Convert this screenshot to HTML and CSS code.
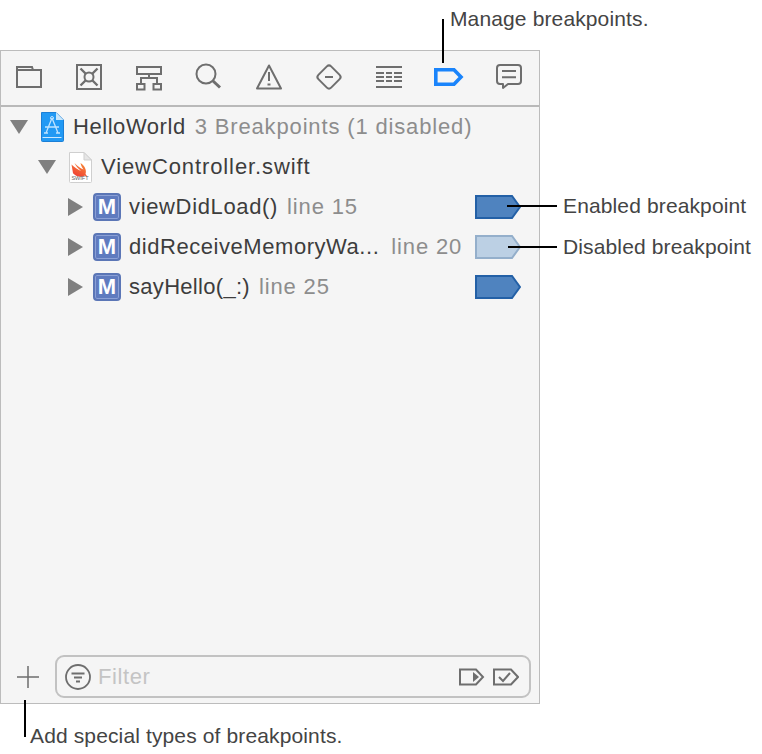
FILE: index.html
```html
<!DOCTYPE html>
<html lang="en">
<head>
<meta charset="utf-8">
<title>Breakpoint navigator</title>
<link rel="stylesheet" href="styles.css">
</head>
<body>
<div class="page">
  <section class="panel">
    <nav class="toolbar">
      <svg class="tool" viewBox="0 0 30 30"><path d="M3 25V5h15l1 3h8v17zM3 8h16"/></svg>
      <svg class="tool" viewBox="0 0 30 30"><rect x="3" y="3" width="24" height="24"/><circle cx="15" cy="15" r="4.500"/><path class="spike" d="M6.500 6.500l5 5M23.500 6.500l-5 5M6.500 23.500l5-5M23.500 23.500l-5-5"/></svg>
      <svg class="tool" viewBox="0 0 30 30"><rect x="3" y="5" width="24" height="7"/><rect x="3" y="22" width="7.500" height="5.500"/><rect x="19.500" y="22" width="7.500" height="5.500"/><path d="M15 12v4M7 22v-6h16v6"/></svg>
      <svg class="tool" viewBox="0 0 30 30"><circle cx="12" cy="12" r="9.500"/><path class="thick" d="M18.500 18.500l7.500 7"/></svg>
      <svg class="tool" viewBox="0 0 30 30"><path class="round" d="M15 3.500L27 26.500H3zM15 10v9"/><path class="thick" d="M15 21.500v2"/></svg>
      <svg class="tool" viewBox="0 0 30 30"><rect x="6" y="6" width="18" height="18" rx="3" transform="rotate(45 15 15)"/><path d="M11 15h8"/></svg>
      <svg class="tool" viewBox="0 0 30 30"><path d="M2 5h26M2 25h26M2 11h8M12 11h6M20 11h8M2 15h8M12 15h6M20 15h8M2 19h8M12 19h6M20 19h8"/></svg>
      <svg class="tool tool-active" viewBox="0 0 30 30"><path d="M1.800 7.800H20L27 15l-7 7.200H1.800z"/></svg>
      <svg class="tool" viewBox="0 0 30 30"><path class="round" d="M6 3h18a3 3 0 0 1 3 3v13a3 3 0 0 1-3 3H14l-5 4v-4H6a3 3 0 0 1-3-3V6a3 3 0 0 1 3-3zM8 9h14M8 15.300h14"/></svg>
    </nav>

    <div class="tree">
      <div class="row row-project">
        <span class="tri tri-down"></span>
        <svg class="file-icon" viewBox="0 0 24 30">
          <path class="app-page" d="M1.500 .5h14.500l7.500 7.500v20.500a1 1 0 0 1-1 1h-20a1 1 0 0 1-1-1z"/>
          <path class="app-fold" d="M16 .5v7.500h7.500z"/>
          <path class="app-rule" d="M2.500 25.500h19"/>
          <path class="app-a" d="M12 6L6 21M12 6l6 15M5 15h14M4 21h4M16 21h4"/>
          <circle class="app-dot" cx="12" cy="6" r="1.500"/>
        </svg>
        <span class="name">HelloWorld</span>
        <span class="detail">3 Breakpoints (1 disabled)</span>
      </div>
      <div class="row row-file">
        <span class="tri tri-down"></span>
        <svg class="file-icon swift-icon" viewBox="0 0 24 31">
          <defs>
            <linearGradient id="swiftFill" x1="0.800" y1="0" x2="0.200" y2="1">
              <stop offset="0" stop-color="#f88a36"/>
              <stop offset="1" stop-color="#ee3a34"/>
            </linearGradient>
          </defs>
          <path class="doc-page" d="M1.500 .5h14.500l7.500 7.500v21.500a1 1 0 0 1-1 1h-20a1 1 0 0 1-1-1z"/>
          <path class="doc-fold" d="M16 .5v7.500h7.500z"/>
          <path class="swift-bird" d="M3.500 12.500c3 3 6 5 9.500 6.500-3-2.500-5-5-6.500-8 3 3 6 5.500 9 6.500-1.500-2-2.500-4-3-6.500 4 2.500 6.500 7 5 11 1 1 1.500 2 1.500 3-1.200-1.200-2.500-1.400-3.500-.8-3 1.300-7.500.3-10.500-3-.5-3-1-6-1.500-8.700z"/>
          <text class="swift-text" x="12" y="27.500" text-anchor="middle">SWIFT</text>
        </svg>
        <span class="name">ViewController.swift</span>
      </div>
      <div class="row row-method">
        <span class="tri tri-right"></span>
        <span class="method-icon"><span class="method-letter">M</span></span>
        <span class="name">viewDidLoad()</span>
        <span class="detail">line 15</span>
        <svg class="flag" viewBox="0 0 46 24"><path d="M1 1h36l8 11-8 11H1z"/></svg>
      </div>
      <div class="row row-method">
        <span class="tri tri-right"></span>
        <span class="method-icon"><span class="method-letter">M</span></span>
        <span class="name name-truncated">didReceiveMemoryWa...</span>
        <span class="detail">line 20</span>
        <svg class="flag flag-off" viewBox="0 0 46 24"><path d="M1 1h36l8 11-8 11H1z"/></svg>
      </div>
      <div class="row row-method">
        <span class="tri tri-right"></span>
        <span class="method-icon"><span class="method-letter">M</span></span>
        <span class="name name-narrow">sayHello(_:)</span>
        <span class="detail">line 25</span>
        <svg class="flag" viewBox="0 0 46 24"><path d="M1 1h36l8 11-8 11H1z"/></svg>
      </div>
    </div>

    <footer class="footer">
      <svg class="plus" viewBox="0 0 22 22"><path d="M11 0v22M0 11h22"/></svg>
      <div class="filter">
        <svg class="filter-icon" viewBox="0 0 26 26"><circle cx="13" cy="13" r="12"/><path d="M6.500 9.500h13M9 13.500h8M11 17.500h4"/></svg>
        <span class="filter-text">Filter</span>
        <svg class="filter-tag" viewBox="0 0 26 18"><path d="M1 1.500h16l7 7.500-7 7.500H1z"/><path class="tag-play" d="M14 4l6 5-6 5z"/></svg>
        <svg class="filter-tag" viewBox="0 0 26 18"><path d="M1 1.500h17l7 7.500-7 7.500H1z"/><path d="M6 9l4 4 7-8"/></svg>
      </div>
    </footer>
  </section>

  <div class="line line-manage"></div>
  <div class="label label-manage">Manage breakpoints.</div>
  <div class="line line-enabled"></div>
  <div class="label label-enabled">Enabled breakpoint</div>
  <div class="line line-disabled"></div>
  <div class="label label-disabled">Disabled breakpoint</div>
  <div class="line line-add"></div>
  <div class="label label-add">Add special types of breakpoints.</div>
</div>
</body>
</html>
```

FILE: styles.css
```css
* { box-sizing: border-box; }

html, body {
  margin: 0;
  background: #fff;
}

.page {
  position: relative;
  width: 762px;
  height: 754px;
  padding-top: 50px;
  font-family: "Liberation Sans", Arial, sans-serif;
  color: #3d3d3d;
  overflow: hidden;
}

.panel {
  width: 540px;
  height: 654px;
  display: flex;
  flex-direction: column;
  background: #f5f5f5;
  border: 1px solid #bcbcbc;
}

.toolbar {
  flex: none;
  height: 56px;
  display: flex;
  gap: 30px;
  align-items: center;
  padding: 0 0 2px 13px;
  border-bottom: 2px solid #b9b9b9;
}

.tool {
  width: 30px;
  height: 30px;
  flex: none;
  fill: none;
  stroke: #6e6e6e;
  stroke-width: 2;
}

.tool .thick { stroke-width: 3; }
.tool .spike { stroke-width: 2.400; }
.tool .round { stroke-linejoin: round; }

.tool-active {
  stroke: #1a84fb;
  stroke-width: 3.600;
}

.tree {
  flex: 1;
  min-height: 0;
}

.row {
  height: 40px;
  display: flex;
  align-items: center;
  font-size: 22px;
  white-space: nowrap;
  padding-right: 18px;
}

.row-project { padding-left: 9px; letter-spacing: 0.55px; }
.row-file { padding-left: 37px; letter-spacing: 0.9px; }
.row-method { padding-left: 67px; letter-spacing: 0.65px; }

.tri {
  flex: none;
  width: 0;
  height: 0;
  border-style: solid;
  border-color: transparent;
}

.tri-down {
  border-width: 14px 9px 0;
  border-top-color: #808080;
  margin-right: 12px;
}

.tri-right {
  border-width: 9px 0 9px 15px;
  border-left-color: #808080;
  margin-right: 10px;
}

.file-icon {
  flex: none;
  width: 24px;
  height: 30px;
  margin-right: 9px;
}

.swift-icon {
  height: 31px;
  margin-right: 9px;
}

.app-page { fill: #2199f4; stroke: #1b7fd6; stroke-width: 1; }
.app-fold { fill: #c9e6fb; }
.app-rule { stroke: #cbe8ff; stroke-width: 1; fill: none; }
.app-a { stroke: #bfe3ff; stroke-width: 1.300; fill: none; }
.app-dot { fill: none; stroke: #bfe3ff; stroke-width: 1; }

.doc-page { fill: #fff; stroke: #cfcfcf; stroke-width: 1; }
.doc-fold { fill: #e6e6e6; stroke: #cfcfcf; stroke-width: 1; }
.swift-bird { fill: url(#swiftFill); }
.swift-text {
  font-family: "Liberation Sans", Arial, sans-serif;
  font-size: 5.500px;
  fill: #666;
  letter-spacing: 0;
}

.method-icon {
  flex: none;
  width: 28px;
  height: 28px;
  display: flex;
  align-items: center;
  justify-content: center;
  margin-right: 8px;
  border: 2px solid #5b76b6;
  border-radius: 4px;
  background: #5f7bbf;
  box-shadow: inset 0 0 0 1px #8ba0d6;
}

.method-letter {
  color: #fff;
  font-size: 22px;
  font-weight: 700;
  line-height: 1;
  letter-spacing: 0;
}

.name {
  flex: none;
  color: #3d3d3d;
}

.name-truncated { letter-spacing: 0.55px; }
.name-narrow { letter-spacing: 0.3px; }

.detail {
  flex: none;
  margin-left: 9px;
  color: #8d8d8d;
}

.row-project .detail { letter-spacing: 0.85px; }
.row-method .detail { margin-right: 11px; letter-spacing: 0.85px; }
.row-method .flag { margin-left: auto; }
.name-truncated + .detail { margin-left: 12px; }

.flag {
  flex: none;
  width: 46px;
  height: 24px;
  fill: #4f83bf;
  stroke: #2360a6;
  stroke-width: 2;
}

.flag-off {
  fill: #bcd0e4;
  stroke: #94afcb;
}

.footer {
  flex: none;
  height: 48px;
  display: flex;
  align-items: flex-start;
  padding: 0 8px 0 16px;
}

.plus {
  flex: none;
  width: 22px;
  height: 22px;
  margin: 11px 16px 0 0;
  fill: none;
  stroke: #6e6e6e;
  stroke-width: 1.500;
}

.filter {
  flex: 1;
  height: 43px;
  display: flex;
  align-items: center;
  padding: 0 10px 0 8px;
  border: 2px solid #c2c2c2;
  border-radius: 9px;
}

.filter-icon {
  flex: none;
  width: 26px;
  height: 26px;
  fill: none;
  stroke: #6e6e6e;
  stroke-width: 1.800;
  margin-right: 7px;
}

.filter-text {
  flex: 1;
  font-size: 22px;
  letter-spacing: 0.6px;
  color: #c4c4c4;
}

.filter-tag {
  flex: none;
  width: 26px;
  height: 18px;
  fill: none;
  stroke: #6e6e6e;
  stroke-width: 2;
  margin-left: 8px;
}

.filter-tag .tag-play {
  fill: #6e6e6e;
  stroke: none;
}

.line {
  position: absolute;
  background: #000;
}

.line-manage { left: 442px; top: 19px; width: 2px; height: 44px; }
.line-enabled { left: 507px; top: 205px; width: 50px; height: 2px; }
.line-disabled { left: 508px; top: 246px; width: 49px; height: 2px; }
.line-add { left: 24px; top: 700px; width: 2px; height: 37px; }

.label {
  position: absolute;
  font-size: 21px;
  line-height: 24px;
  letter-spacing: 0.13px;
  white-space: nowrap;
  color: #444;
}

.label-manage { left: 450px; top: 7px; }
.label-enabled { left: 563px; top: 194px; }
.label-disabled { left: 563px; top: 235px; }
.label-add { left: 30px; top: 724px; }
```
